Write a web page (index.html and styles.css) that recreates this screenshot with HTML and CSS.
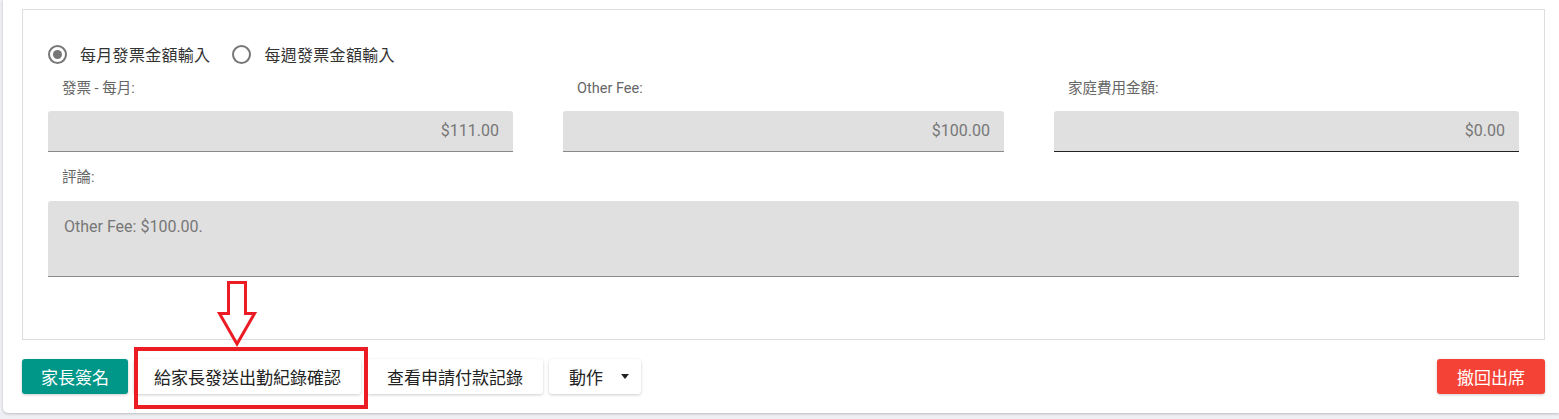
FILE: index.html
```html
<!DOCTYPE html>
<html lang="zh-Hant">
<head>
    <meta charset="UTF-8">
    <title>出勤紀錄</title>
    <link rel="stylesheet" href="styles.css">
</head>
<body>
<div class="card">
    <div class="panel">
        <div class="radios">
            <label class="radio checked"><span class="dot"></span>每月發票金額輸入</label>
            <label class="radio"><span class="dot"></span>每週發票金額輸入</label>
        </div>
        <div class="fields">
            <div class="field">
                <div class="label">發票 - 每月:</div>
                <div class="input">$111.00</div>
            </div>
            <div class="field">
                <div class="label">Other Fee:</div>
                <div class="input">$100.00</div>
            </div>
            <div class="field">
                <div class="label">家庭費用金額:</div>
                <div class="input focus">$0.00</div>
            </div>
        </div>
        <div class="label">評論:</div>
        <div class="textarea">Other Fee: $100.00.</div>
    </div>
    <div class="actions">
        <div class="btn-group">
            <button class="btn btn-teal">家長簽名</button>
            <button class="btn">給家長發送出勤紀錄確認</button>
            <button class="btn">查看申請付款記錄</button>
            <button class="btn btn-drop">動作<span class="caret"></span></button>
        </div>
        <button class="btn btn-red">撤回出席</button>
    </div>

    <!-- 標註 -->
    <svg class="arrow" width="44" height="68" viewBox="0 0 44 68">
        <path d="M13.5 2.5 H30.5 V33.5 H39.5 L22 64 L4.5 33.5 H13.5 Z" fill="none" stroke="#ec1c24" stroke-width="3"/>
    </svg>
    <div class="mark"></div>
</div>
</body>
</html>
```

FILE: styles.css
```css
*{
    margin: 0;
    padding: 0;
    box-sizing: border-box;
}
body{
    background-color: #eef0f4;
    font-family: Roboto, "Noto Sans CJK TC", sans-serif;
    color: #333;
    padding-left: 3px;
    height: 419px;
    overflow: hidden;
}
.card{
    position: relative;
    background-color: #fff;
    height: 413px;
    padding: 9px 14px 0 19px;
    border-radius: 0 0 0 5px;
    box-shadow: 0 1px 3px rgba(0,0,0,.22);
}
.panel{
    border: 1px solid #dedede;
    height: 331px;
    padding: 32px 25px 0 25px;
}
.radios{
    display: flex;
    align-items: center;
    height: 24px;
    font-size: 16px;
    letter-spacing: 0.3px;
}
.radio{
    display: flex;
    align-items: center;
    margin-right: 22px;
}
.radio .dot{
    width: 19px;
    height: 19px;
    border: 2px solid #777;
    border-radius: 50%;
    margin-right: 13px;
    display: flex;
    align-items: center;
    justify-content: center;
}
.radio.checked .dot::after{
    content: "";
    width: 9px;
    height: 9px;
    border-radius: 50%;
    background-color: #777;
}
.fields{
    display: grid;
    grid-template-columns: 465fr 441fr 465fr;
    column-gap: 50px;
    margin-top: 13px;
}
.label{
    font-size: 14.5px;
    line-height: 20px;
    color: #666;
    padding-left: 14px;
}
.input{
    margin-top: 12px;
    height: 41px;
    background-color: #e0e0e0;
    border-bottom: 1px solid #8a8a8a;
    border-radius: 3px 3px 0 0;
    font-size: 16px;
    line-height: 40px;
    color: #777;
    text-align: right;
    padding-right: 14px;
}
.input.focus{
    border-bottom-color: #222;
}
.fields + .label{
    margin-top: 16px;
}
.textarea{
    margin-top: 13px;
    height: 76px;
    background-color: #e0e0e0;
    border-bottom: 1px solid #8a8a8a;
    border-radius: 3px 3px 0 0;
    font-size: 16px;
    color: #777;
    padding: 16px 16px 0 16px;
    line-height: 20px;
}
.actions{
    display: flex;
    justify-content: space-between;
    margin-top: 19px;
}
.btn-group{
    display: flex;
    gap: 6px;
}
.btn{
    height: 35px;
    padding: 0 20px;
    border: none;
    border-radius: 3px;
    background-color: #fff;
    font-family: Roboto, "Noto Sans CJK TC", sans-serif;
    font-size: 17px;
    color: #222;
    box-shadow: 0 1px 3px rgba(0,0,0,.2);
    display: flex;
    align-items: center;
}
.btn-teal{
    background-color: #009688;
    color: #fff;
    padding: 0 19px;
}
.btn-red{
    background-color: #f44336;
    color: #fff;
    padding: 0 20px;
}
.btn-drop{
    padding-right: 12px;
}
.caret{
    margin-left: 18px;
    width: 0;
    height: 0;
    border-left: 4px solid transparent;
    border-right: 4px solid transparent;
    border-top: 5px solid #222;
}
.arrow{
    position: absolute;
    left: 212px;
    top: 280px;
}
.mark{
    position: absolute;
    left: 131px;
    top: 347px;
    width: 234px;
    height: 62px;
    border: 4px solid #ec1c24;
}
```
